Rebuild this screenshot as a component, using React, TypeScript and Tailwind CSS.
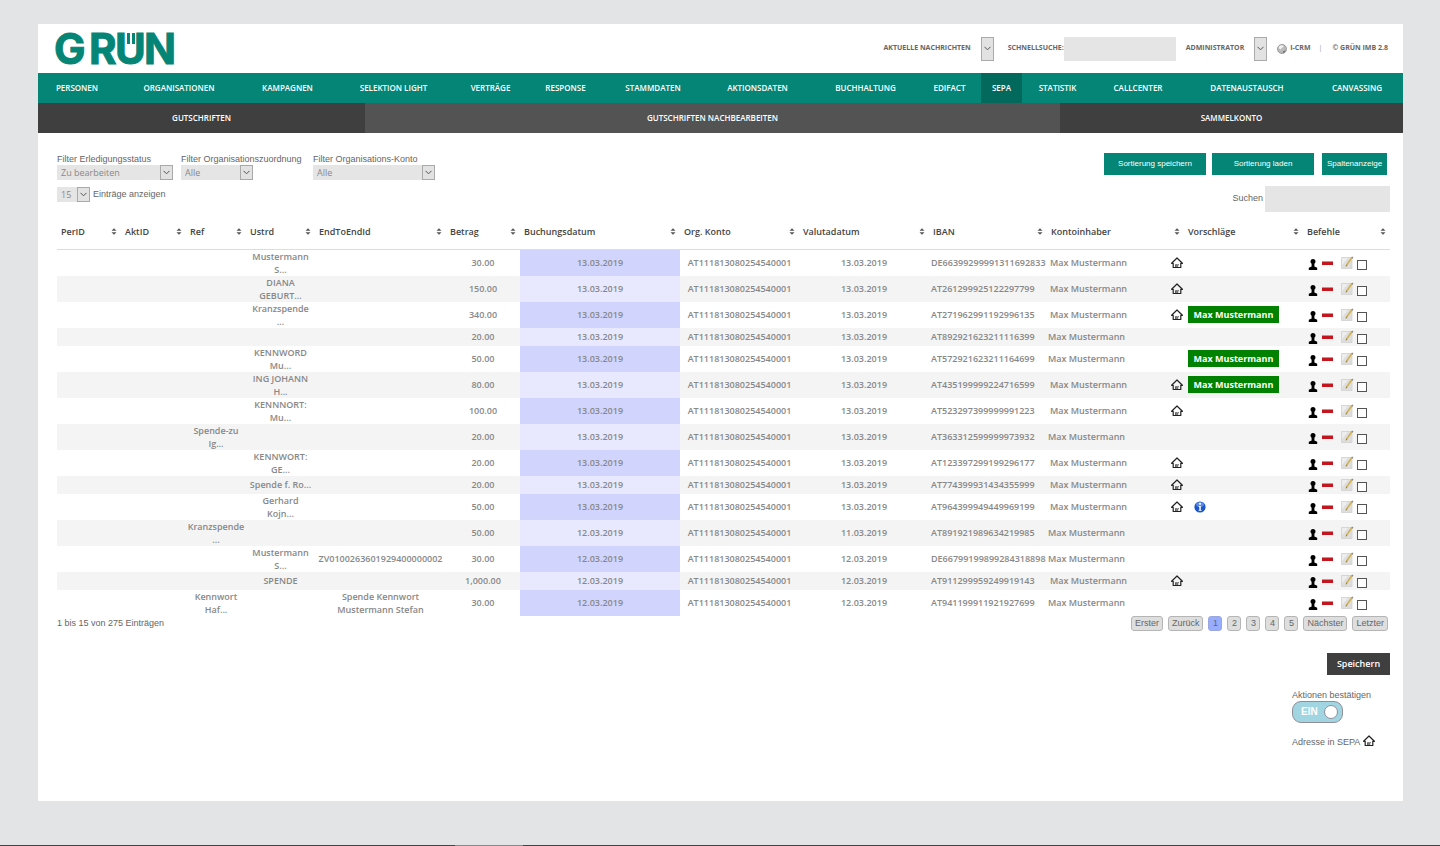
import type { ReactNode } from "react";

const NAV_ITEMS = [
  "Personen",
  "Organisationen",
  "Kampagnen",
  "Selektion Light",
  "Verträge",
  "Response",
  "Stammdaten",
  "Aktionsdaten",
  "Buchhaltung",
  "Edifact",
  "SEPA",
  "Statistik",
  "Callcenter",
  "Datenaustausch",
  "Canvassing",
];

const COLUMNS = [
  { label: "PerID", width: "w-[64px]" },
  { label: "AktID", width: "w-[65px]" },
  { label: "Ref", width: "w-[60px]" },
  { label: "Ustrd", width: "w-[69px]" },
  { label: "EndToEndId", width: "w-[131px]" },
  { label: "Betrag", width: "w-[74px]" },
  { label: "Buchungsdatum", width: "w-[160px]" },
  { label: "Org. Konto", width: "w-[119px]" },
  { label: "Valutadatum", width: "w-[130px]" },
  { label: "IBAN", width: "w-[118px]" },
  { label: "Kontoinhaber", width: "w-[137px]" },
  { label: "Vorschläge", width: "w-[119px]" },
  { label: "Befehle", width: "w-[87px]" },
];

interface Booking {
  ref?: [string, string];
  ustrd?: string[];
  endToEnd?: string[];
  amount: string;
  booked: string;
  valuta: string;
  iban: string;
  /** Address is known in SEPA */
  home?: boolean;
  suggestion?: "match" | "info";
}

const BOOKINGS: Booking[] = [
  { ustrd: ["Mustermann", "S..."], amount: "30.00", booked: "13.03.2019", valuta: "13.03.2019", iban: "DE66399299991311692833", home: true },
  { ustrd: ["DIANA", "GEBURT..."], amount: "150.00", booked: "13.03.2019", valuta: "13.03.2019", iban: "AT261299925122297799", home: true },
  { ustrd: ["Kranzspende", "..."], amount: "340.00", booked: "13.03.2019", valuta: "13.03.2019", iban: "AT271962991192996135", home: true, suggestion: "match" },
  { amount: "20.00", booked: "13.03.2019", valuta: "13.03.2019", iban: "AT892921623211116399" },
  { ustrd: ["KENNWORD", "Mu..."], amount: "50.00", booked: "13.03.2019", valuta: "13.03.2019", iban: "AT572921623211164699", suggestion: "match" },
  { ustrd: ["ING JOHANN", "H..."], amount: "80.00", booked: "13.03.2019", valuta: "13.03.2019", iban: "AT435199999224716599", home: true, suggestion: "match" },
  { ustrd: ["KENNNORT:", "Mu..."], amount: "100.00", booked: "13.03.2019", valuta: "13.03.2019", iban: "AT523297399999991223", home: true },
  { ref: ["Spende-zu", "Ig..."], amount: "20.00", booked: "13.03.2019", valuta: "13.03.2019", iban: "AT363312599999973932" },
  { ustrd: ["KENNWORT:", "GE..."], amount: "20.00", booked: "13.03.2019", valuta: "13.03.2019", iban: "AT123397299199296177", home: true },
  { ustrd: ["Spende f. Ro..."], amount: "20.00", booked: "13.03.2019", valuta: "13.03.2019", iban: "AT774399931434355999", home: true },
  { ustrd: ["Gerhard", "Kojn..."], amount: "50.00", booked: "13.03.2019", valuta: "13.03.2019", iban: "AT964399949449969199", home: true, suggestion: "info" },
  { ref: ["Kranzspende", "..."], amount: "50.00", booked: "12.03.2019", valuta: "11.03.2019", iban: "AT891921989634219985" },
  { ustrd: ["Mustermann", "S..."], endToEnd: ["ZV0100263601929400000002"], amount: "30.00", booked: "12.03.2019", valuta: "12.03.2019", iban: "DE66799199899284318898" },
  { ustrd: ["SPENDE"], amount: "1,000.00", booked: "12.03.2019", valuta: "12.03.2019", iban: "AT911299959249919143", home: true },
  { ref: ["Kennwort", "Haf..."], endToEnd: ["Spende Kennwort", "Mustermann Stefan"], amount: "30.00", booked: "12.03.2019", valuta: "12.03.2019", iban: "AT941199911921927699" },
];

const ORG_KONTO = "AT111813080254540001";

const PAGES = ["Erster", "Zurück", "1", "2", "3", "4", "5", "Nächster", "Letzter"];

function Logo() {
  return (
    <svg width="130" height="56" viewBox="0 -11 130 56" role="img" aria-label="GRÜN" fill="#048575" className="overflow-visible">
      {/* The umlaut hangs between the arms of the U, so the dots above are clipped away */}
      <clipPath id="cap-height">
        <rect x="-2" y="0" width="134" height="36" />
      </clipPath>
      <text
        x="-1 34 60 89"
        y="32"
        clipPath="url(#cap-height)"
        fontFamily="Inter, sans-serif"
        fontWeight="700"
        fontSize="42"
        stroke="#048575"
        strokeWidth="1"
      >
        GRÜN
      </text>
      <rect x="72" y="1" width="3" height="11" />
      <rect x="77" y="1" width="3" height="11" />
    </svg>
  );
}

function HomeIcon() {
  return (
    <svg width="12" height="12" viewBox="0 0 12 12" fill="none" stroke="#222" className="shrink-0">
      <path d="M.6 6.300 6 1l5.400 5.300H9.800v4.200H2.200V6.300z" strokeWidth="1.200" strokeLinejoin="round" />
      <path d="M4.500 10V7.600h1.200V10M6.700 10V7.600h1.200" strokeWidth=".7" />
    </svg>
  );
}

function PersonIcon() {
  return (
    <svg width="10" height="11" viewBox="0 0 10 11" fill="#000">
      <path d="M5 0C3.400 0 2.500 1.100 2.500 2.500c0 1 .5 1.800 1.100 2.300v2.700L.8 8.700V11h8.400V8.700L6.400 7.500V4.800c.6-.5 1.100-1.300 1.100-2.300C7.500 1.100 6.600 0 5 0z" />
    </svg>
  );
}

function MinusIcon() {
  return (
    <svg width="11" height="4" viewBox="0 0 11 4">
      <rect width="11" height="4" fill="#e0868a" />
      <rect y="1" width="11" height="3" fill="#c4161f" />
    </svg>
  );
}

function EditIcon() {
  return (
    <svg width="13" height="13" viewBox="0 0 13 13">
      <path d="M.5 1.500h10.500v11H.5z" fill="#dedede" stroke="#cfcfcf" strokeWidth=".8" />
      <path d="M1 2h6L1 9z" fill="#eee" />
      <path d="M11 1.500 5.200 9.600" stroke="#d2b04c" strokeWidth="1.600" />
      <path d="M11.800 1 11 2.200" stroke="#888" strokeWidth="1.600" />
      <path d="m5.600 8.600-1.200 2.500 2-1.600z" fill="#8a7540" />
    </svg>
  );
}

function InfoIcon() {
  return (
    <svg width="12" height="12" viewBox="0 0 12 12">
      <circle cx="6" cy="6" r="5.600" fill="#1c57c9" />
      <ellipse cx="6" cy="3.400" rx="4" ry="2.400" fill="#5a8ae6" />
      <circle cx="6" cy="2.800" r="1.100" fill="#fff" />
      <path d="M4.600 4.900h2.200v4h.8v.9H4.600v-.9h.7V5.800h-.7z" fill="#fff" />
    </svg>
  );
}

function GlobeIcon() {
  return (
    <svg width="10" height="10" viewBox="0 0 10 10">
      <circle cx="5" cy="5" r="4.500" fill="#bbb" stroke="#8a8a8a" strokeWidth=".8" />
      <path d="M2 2.500C3.500 1 6 1 6.500 2.200 6 4 4.200 3.600 4 5.200 3 5.600 1.500 4.500 2 2.500z" fill="#f1f1f1" />
      <path d="M6 9c-.6-1.600.6-2.800 2.600-2.600C8.400 7.800 7.400 8.800 6 9z" fill="#777" />
    </svg>
  );
}

function SortIcon() {
  return (
    <svg width="6" height="7" viewBox="0 0 6 7" fill="#555" className="shrink-0">
      <path d="M3 .3l2.500 2.500H.5zM3 6.700.5 4.200h5z" />
    </svg>
  );
}

function SelectBox({ id, label, value, className }: { id: string; label?: string; value: string; className: string }) {
  return (
    <div className={`relative ${className}`}>
      <select
        id={id}
        aria-label={label}
        className="block h-full w-full appearance-none bg-[#e5e5e5] pl-1 font-['Open_Sans',sans-serif] text-[9px] leading-[15px] text-[#888]"
      >
        <option>{value}</option>
      </select>
      <span className="pointer-events-none absolute inset-y-0 right-0 flex w-[13px] items-center justify-center border border-[#aaa] bg-[#e2e2e2]">
        <svg width="7" height="5" viewBox="0 0 7 5" fill="none" stroke="#555">
          <path d="M.5.8 3.500 3.800 6.500.8" />
        </svg>
      </span>
    </div>
  );
}

interface FilterProps {
  id: string;
  label: string;
  value: string;
  groupClass: string;
  selectClass: string;
}

function Filter({ id, label, value, groupClass, selectClass }: FilterProps) {
  return (
    <div className={groupClass}>
      <label htmlFor={id} className="block leading-3 whitespace-nowrap">
        {label}
      </label>
      <SelectBox id={id} value={value} className={`h-[15px] ${selectClass}`} />
    </div>
  );
}

function GreenButton({ className, children }: { className: string; children: ReactNode }) {
  return <button className={`h-[22px] bg-[#048575] text-center text-[8px] text-white ${className}`}>{children}</button>;
}

function Lines({ lines }: { lines?: string[] }) {
  return lines?.map((line) => (
    <span key={line} className="block whitespace-nowrap">
      {line}
    </span>
  ));
}

function BookingRow({ booking, index }: { booking: Booking; index: number }) {
  const even = index % 2 === 1;
  const twoLines = [booking.ref, booking.ustrd, booking.endToEnd].some((lines) => lines?.length === 2);

  return (
    <tr className={`${twoLines ? "h-[26px]" : "h-[18px]"} ${even ? "bg-[#f4f4f4]" : ""}`}>
      <td />
      <td />
      <td><Lines lines={booking.ref} /></td>
      <td><Lines lines={booking.ustrd} /></td>
      <td><Lines lines={booking.endToEnd} /></td>
      <td>{booking.amount}</td>
      <td className={even ? "bg-[#e8e9ff]" : "bg-[#d1d4fd]"}>{booking.booked}</td>
      <td>{ORG_KONTO}</td>
      <td>{booking.valuta}</td>
      <td className="pl-[2px] text-left">{booking.iban}</td>
      <td>
        <div className={`flex items-center justify-between pr-[1px] ${booking.home ? "pl-[3px]" : "pl-[1px]"}`}>
          Max Mustermann
          {booking.home && <HomeIcon />}
        </div>
      </td>
      <td className="text-left">
        {booking.suggestion === "match" && (
          <button className="ml-1 block h-[17px] w-[91px] bg-[#008200] font-bold whitespace-nowrap text-white">
            Max Mustermann
          </button>
        )}
        {booking.suggestion === "info" && (
          <button aria-label="Information" className="ml-[10px] block">
            <InfoIcon />
          </button>
        )}
      </td>
      <td>
        <div className="flex h-[15px] items-center pl-[5px]">
          <button aria-label="Person" className="mt-1"><PersonIcon /></button>
          <button aria-label="Entfernen" className="ml-1"><MinusIcon /></button>
          <button aria-label="Bearbeiten" className="ml-2"><EditIcon /></button>
          <input
            type="checkbox"
            aria-label={`Eintrag ${index + 1} auswählen`}
            className="mt-1 ml-[3px] size-[10px] appearance-none border border-[#555] bg-white"
          />
        </div>
      </td>
    </tr>
  );
}

function Header() {
  return (
    <header className="flex h-[49px] items-center pr-[15px] pl-[17px] font-['Open_Sans',sans-serif] text-[7px] font-bold text-[#666] uppercase">
      <a href="#" className="mr-auto"><Logo /></a>
      <label htmlFor="news">Aktuelle Nachrichten</label>
      <SelectBox id="news" value="" className="ml-[10px] h-6 w-[13px]" />
      <label htmlFor="quick" className="ml-[14px]">Schnellsuche:</label>
      <input id="quick" className="mr-[10px] h-6 w-[112px] bg-[#e5e5e5] px-1" />
      <label htmlFor="account">Administrator</label>
      <SelectBox id="account" value="" className="mx-[10px] h-6 w-[13px]" />
      <GlobeIcon />
      <a href="#" className="ml-[3px]">i-CRM</a>
      <span className="mr-[10px] ml-2 font-normal text-[#999]">|</span>
      <span>© GRÜN IMB 2.8</span>
    </header>
  );
}

export default function App() {
  return (
    <div className="flex min-h-screen flex-col bg-[#e3e4e6] font-['Liberation_Sans',sans-serif] text-[9px] text-[#666]">
      <div className="mt-6 mr-[37px] mb-11 ml-[38px] flex-1 bg-white">
        <Header />

        <nav className="grid h-[30px] grid-cols-[78fr_126fr_91fr_121fr_73fr_77fr_98fr_111fr_105fr_63fr_41fr_71fr_90fr_128fr_92fr] bg-[#048575] font-['Open_Sans',sans-serif] text-[8px] font-semibold text-white uppercase">
          {NAV_ITEMS.map((item) => (
            <a
              key={item}
              href="#"
              className={`flex items-center justify-center whitespace-nowrap ${item === "SEPA" ? "bg-[#03695c]" : ""}`}
            >
              {item}
            </a>
          ))}
        </nav>
        <nav className="grid h-[30px] grid-cols-[327fr_695fr_343fr] bg-[#3f3f3f] font-['Open_Sans',sans-serif] text-[8px] font-semibold text-white uppercase">
          <a href="#" className="flex items-center justify-center">Gutschriften</a>
          <a href="#" className="flex items-center justify-center bg-[#535353]">Gutschriften nachbearbeiten</a>
          <a href="#" className="flex items-center justify-center">Sammelkonto</a>
        </nav>

        <main className="pt-5 pr-[13px] pl-[19px]">
          <div className="flex justify-between">
            <div>
              <div className="flex gap-2">
                <Filter id="status" label="Filter Erledigungsstatus" value="Zu bearbeiten" groupClass="w-[116px]" selectClass="w-[116px]" />
                <Filter id="zuordnung" label="Filter Organisationszuordnung" value="Alle" groupClass="w-[124px]" selectClass="w-[72px]" />
                <Filter id="konto" label="Filter Organisations-Konto" value="Alle" groupClass="w-[122px]" selectClass="w-[122px]" />
              </div>
              <div className="mt-[7px] flex items-center gap-[3px]">
                <SelectBox id="length" value="15" className="h-[15px] w-[33px]" />
                <label htmlFor="length">Einträge anzeigen</label>
              </div>
            </div>
            <div>
              <div className="flex pr-[3px]">
                <GreenButton className="mr-[6px] w-[102px]">Sortierung speichern</GreenButton>
                <GreenButton className="mr-2 w-[102px]">Sortierung laden</GreenButton>
                <GreenButton className="w-[65px]">Spaltenanzeige</GreenButton>
              </div>
              <div className="mt-[11px] flex items-center justify-end gap-[2px]">
                <label htmlFor="search">Suchen</label>
                <input id="search" type="search" className="h-[26px] w-[125px] bg-[#e5e5e5] px-1" />
              </div>
            </div>
          </div>

          <table className="mt-[3px] w-full table-fixed border-collapse text-center font-['Open_Sans',sans-serif] text-[9px] leading-[13px] font-semibold text-[#888]">
            <thead>
              <tr className="h-[34px] border-b border-[#ddd] text-[#444]">
                {COLUMNS.map((col) => (
                  <th key={col.label} className={`px-1 font-semibold ${col.width}`}>
                    <div className="flex items-center justify-between">
                      {col.label}
                      <SortIcon />
                    </div>
                  </th>
                ))}
              </tr>
            </thead>
            <tbody>
              {BOOKINGS.map((booking, i) => (
                <BookingRow key={booking.iban} booking={booking} index={i} />
              ))}
            </tbody>
          </table>

          <div className="flex items-start justify-between pr-[2px]">
            <p className="pt-px leading-[13px]">1 bis 15 von 275 Einträgen</p>
            <div className="flex gap-[5px]">
              {PAGES.map((page) => (
                <button
                  key={page}
                  className={`h-[15px] min-w-[14px] rounded-[3px] border px-[3px] leading-[13px] ${
                    page === "1" ? "border-[#9aa6dd] bg-[#99adff]" : "border-[#b5b5b5] bg-[#dedede]"
                  }`}
                >
                  {page}
                </button>
              ))}
            </div>
          </div>

          <div className="flex flex-col items-end pb-12">
            <button className="mt-[22px] h-[22px] w-[63px] bg-[#3f3f3f] font-['Open_Sans',sans-serif] text-[9px] font-semibold text-white">
              Speichern
            </button>
            <div className="mt-[14px] w-[98px]">
              <label htmlFor="confirm" className="block leading-3">Aktionen bestätigen</label>
              <div className="relative h-[22px] w-[51px]">
                <input
                  id="confirm"
                  type="checkbox"
                  role="switch"
                  defaultChecked
                  className="block h-full w-full appearance-none rounded-[9px] border border-[#8f8f9a] bg-[#a1d5e2]"
                />
                <span className="pointer-events-none absolute inset-0 flex items-center justify-between pr-[5px] pl-[9px] text-[10px] font-bold text-white">
                  EIN
                  <span className="size-[14px] rounded-full border border-[#8f8f9a] bg-white" />
                </span>
              </div>
              <p className="mt-3 flex items-end gap-[3px] leading-[14px] whitespace-nowrap">
                Adresse in SEPA
                <span className="self-start"><HomeIcon /></span>
              </p>
            </div>
          </div>
        </main>
      </div>
      <footer className="grid h-px grid-cols-[455fr_68fr_917fr] bg-[#444]">
        <span className="col-start-2 bg-[#888]" />
      </footer>
    </div>
  );
}
